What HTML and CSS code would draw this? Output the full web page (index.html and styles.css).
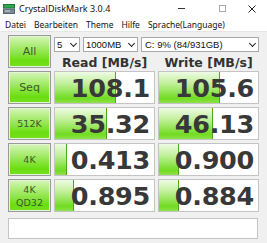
FILE: index.html
```html
<!DOCTYPE html>
<html lang="de">
<head>
<meta charset="UTF-8">
<title>CrystalDiskMark 3.0.4</title>
<link rel="stylesheet" href="styles.css">
</head>
<body>
<div class="window">
    <div class="titlebar">
        <svg class="app-icon" width="12" height="10" viewBox="0 0 12 10">
            <rect x="0.5" y="0.5" width="11" height="3.5" fill="#2fa84f" stroke="#1d7a35"/>
            <rect x="0.5" y="5" width="11" height="4.5" fill="#7a8a96" stroke="#56626c"/>
            <rect x="2" y="6.5" width="5" height="1" fill="#c9d2d9"/>
        </svg>
        <span class="title">CrystalDiskMark 3.0.4</span>
        <div class="controls">
            <span class="ctl-min"></span>
            <span class="ctl-max"></span>
            <svg class="ctl-close" width="8" height="8" viewBox="0 0 8 8">
                <path d="M0.5 0.5 L7.5 7.5 M7.5 0.5 L0.5 7.5" stroke="#222" stroke-width="1"/>
            </svg>
        </div>
    </div>
    <div class="menubar">
        <span>Datei</span>
        <span>Bearbeiten</span>
        <span>Theme</span>
        <span>Hilfe</span>
        <span>Sprache(Language)</span>
    </div>
    <div class="main">
        <div class="grid">
            <div class="btn">All</div>
            <div class="head">
                <div class="combos">
                    <div class="combo c-count">5<span class="chev"></span></div>
                    <div class="combo c-size">1000MB<span class="chev"></span></div>
                    <div class="combo c-drive">C: 9% (84/931GB)<span class="chev"></span></div>
                </div>
                <div class="labels">
                    <span>Read [MB/s]</span>
                    <span>Write [MB/s]</span>
                </div>
            </div>

            <div class="btn">Seq</div>
            <div class="cell"><div class="bar" style="width: 60px"></div><span class="val">108.1</span></div>
            <div class="cell"><div class="bar" style="width: 60px"></div><span class="val">105.6</span></div>

            <div class="btn small">512K</div>
            <div class="cell"><div class="bar" style="width: 51px"></div><span class="val">35.32</span></div>
            <div class="cell"><div class="bar" style="width: 53px"></div><span class="val">46.13</span></div>

            <div class="btn small">4K</div>
            <div class="cell"><div class="bar" style="width: 11px"></div><span class="val">0.413</span></div>
            <div class="cell"><div class="bar" style="width: 19px"></div><span class="val">0.900</span></div>

            <div class="btn small two">4K<br>QD32</div>
            <div class="cell"><div class="bar" style="width: 18px"></div><span class="val">0.895</span></div>
            <div class="cell"><div class="bar" style="width: 19px"></div><span class="val">0.884</span></div>
        </div>
        <div class="comment"></div>
    </div>
</div>
</body>
</html>
```

FILE: styles.css
```css
body {
    margin: 0;
    font-family: "Noto Sans", "Open Sans", sans-serif;
    background-color: #f0f0f0;
}
.window {
    width: 267px;
    height: 243px;
    background-color: #f0f0f0;
    overflow: hidden;
}
.titlebar {
    height: 17px;
    background-color: #fff;
    display: flex;
    align-items: center;
    padding-left: 3px;
    font-size: 9px;
    color: #111;
}
.app-icon {
    margin-right: 4px;
}
.controls {
    margin-left: auto;
    display: flex;
    align-items: center;
    height: 17px;
}
.ctl-min {
    width: 7px;
    height: 1px;
    background-color: #333;
    margin-right: 34px;
}
.ctl-max {
    width: 7px;
    height: 7px;
    border: 1px solid #aaa;
    box-sizing: border-box;
    margin-right: 22px;
}
.ctl-close {
    margin-right: 11px;
}
.menubar {
    height: 14px;
    background-color: #fff;
    display: flex;
    align-items: center;
    padding-left: 5px;
    gap: 8px;
    font-size: 8.5px;
    color: #111;
    border-bottom: 1px solid #e6e6e6;
}
.main {
    padding: 3px 8px 0 8px;
}
.grid {
    display: grid;
    grid-template-columns: 43px 101px 101px;
    grid-template-rows: 33px 33px 33px 33px 33px;
    column-gap: 3px;
    row-gap: 3px;
}
.btn {
    border: 1px solid #9a9a9a;
    box-shadow: inset 0 0 0 1px #e4f6d6;
    background: linear-gradient(#d6f5ba, #9ae85a 45%, #6ade10 80%, #78e024);
    display: flex;
    align-items: center;
    justify-content: center;
    text-align: center;
    font-family: "DejaVu Sans", sans-serif;
    font-size: 11px;
    color: #3c5a2c;
}
.btn.small {
    font-size: 9.5px;
}
.btn.two {
    line-height: 13px;
}
.head {
    grid-column: 2 / 4;
    display: flex;
    flex-direction: column;
}
.combos {
    display: flex;
    gap: 3px;
    margin-top: 2px;
}
.combo {
    height: 13px;
    border: 1px solid #a9a9a9;
    background-color: #fff;
    font-family: "Liberation Sans", sans-serif;
    font-size: 9.5px;
    line-height: 13px;
    color: #111;
    padding-left: 2px;
    position: relative;
}
.c-count { width: 22px; }
.c-size { width: 51px; }
.c-drive { flex: 1; padding-left: 3px; }
.chev {
    position: absolute;
    right: 3px;
    top: 3px;
    width: 4px;
    height: 4px;
    border-right: 1px solid #222;
    border-bottom: 1px solid #222;
    transform: rotate(45deg);
}
.labels {
    display: flex;
    margin-top: 3px;
}
.labels span {
    width: 101px;
    text-align: center;
    font-family: "DejaVu Sans", sans-serif;
    font-weight: bold;
    font-size: 12.5px;
    color: #333;
}
.labels span + span {
    margin-left: 3px;
}
.cell {
    position: relative;
    border: 1px solid #c4c4c4;
    background-color: #fff;
    display: flex;
    align-items: center;
    justify-content: flex-end;
    padding-right: 4px;
}
.bar {
    position: absolute;
    left: 0;
    top: 0;
    bottom: 0;
    background: linear-gradient(#effbe6, #bdef93 40%, #72db22 85%, #8ee24c);
    border-right: 1px solid #4caa1c;
}
.val {
    position: relative;
    font-family: "DejaVu Sans", sans-serif;
    font-weight: bold;
    font-size: 25.5px;
    color: #383838;
    letter-spacing: -0.3px;
}
.comment {
    margin-top: 6px;
    height: 19px;
    border: 1px solid #c4c4c4;
    background-color: #fff;
    width: 248px;
}
```
